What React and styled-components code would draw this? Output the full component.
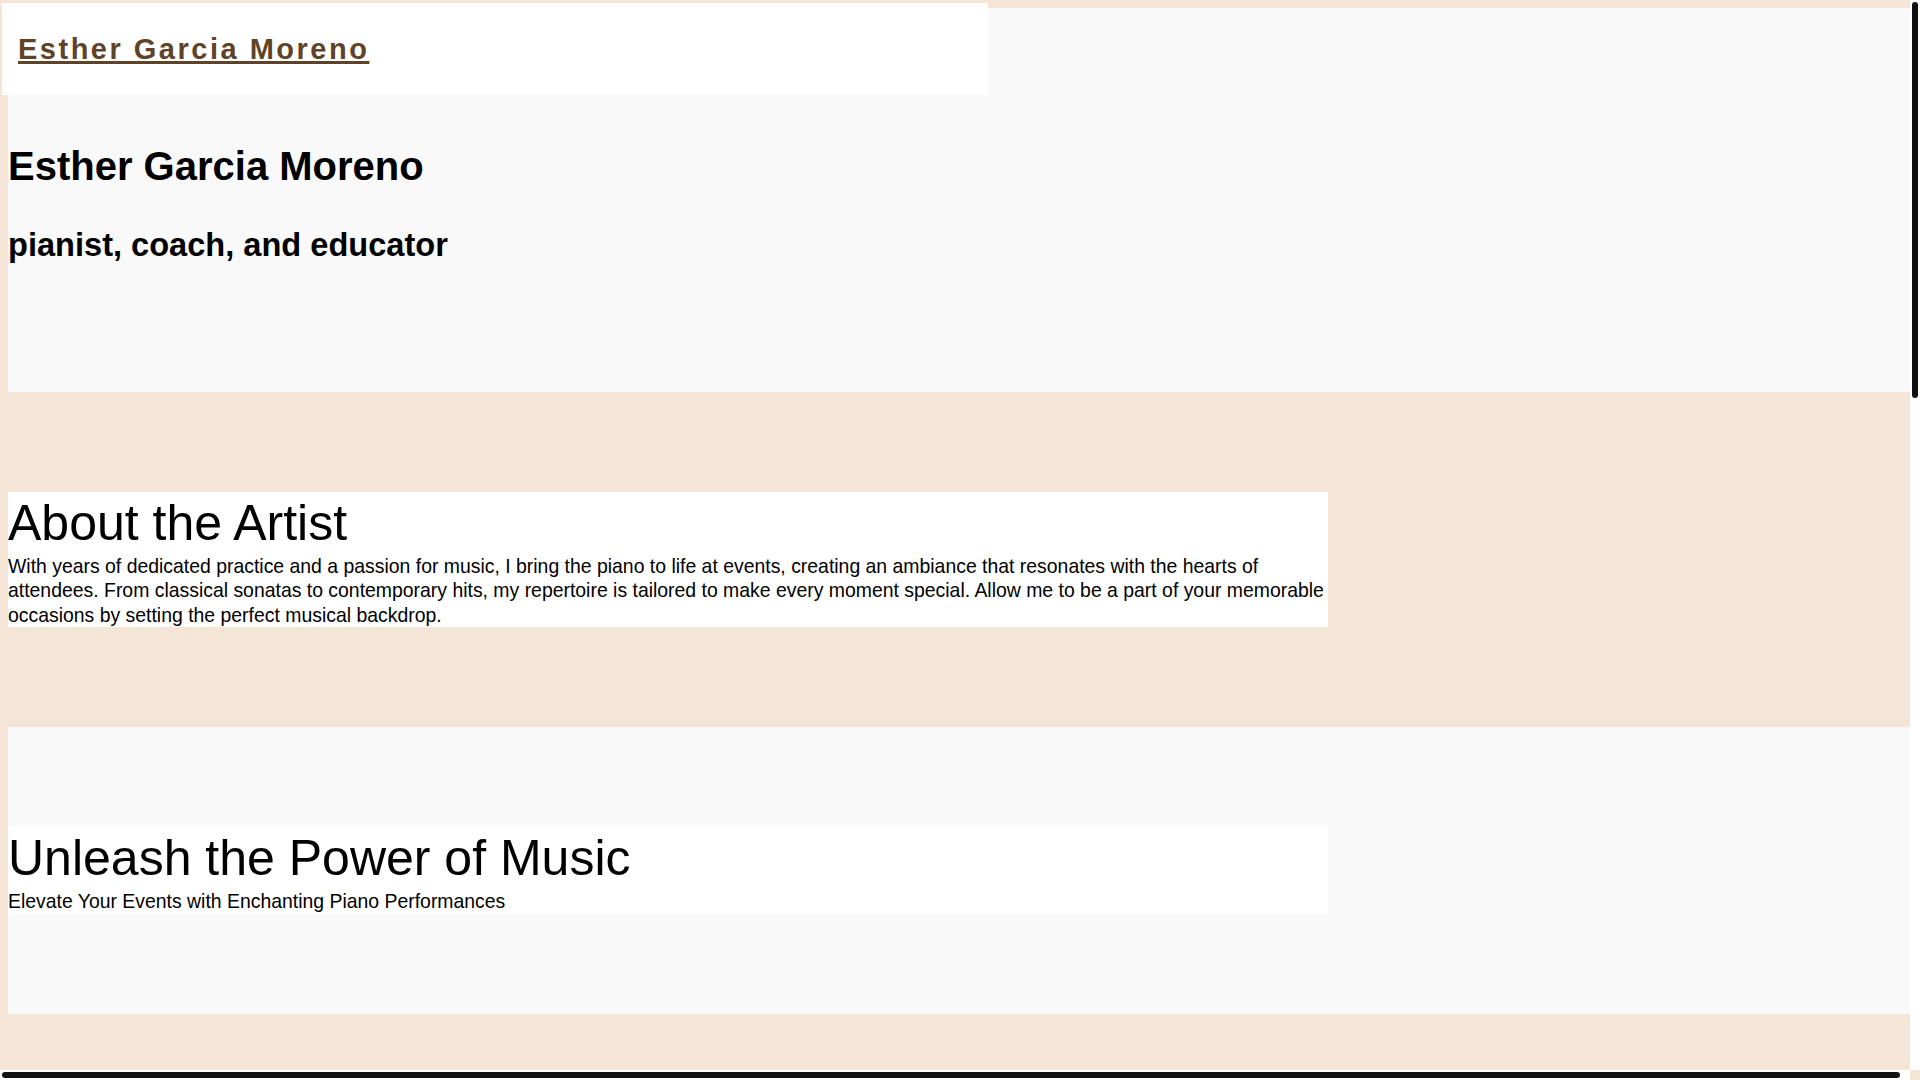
import React from "react"
import styled, {createGlobalStyle} from "styled-components"

const sections = [
	{
		id: "about",
		tone: "sand",
		title: "About the Artist",
		body: "With years of dedicated practice and a passion for music, I bring the piano to life at events, creating an ambiance that resonates with the hearts of attendees. From classical sonatas to contemporary hits, my repertoire is tailored to make every moment special. Allow me to be a part of your memorable occasions by setting the perfect musical backdrop.",
	},
	{
		id: "power",
		tone: "mist",
		title: "Unleash the Power of Music",
		lead: "Elevate Your Events with Enchanting Piano Performances",
	},
	{
		id: "services",
		tone: "sand",
		title: "Services",
		body: "Weddings, receptions, private recitals, corporate dinners and gala evenings. Every performance is planned with you, from the first consultation to the final chord, so the music fits the mood of the room. Coaching for singers and instrumentalists is offered in the studio or online, along with accompaniment for auditions, exams and competitions.",
	},
	{
		id: "lessons",
		tone: "mist",
		title: "Lessons for Every Level",
		body: "Piano lessons for children and adults, beginners and advanced students. Lessons cover technique, reading, theory and repertoire, and are shaped around the goals of each student, whether that is a first recital, a conservatory audition or simply the joy of playing at home.",
	},
	{
		id: "repertoire",
		tone: "sand",
		title: "Repertoire",
		body: "Bach, Mozart, Chopin, Debussy and Granados sit beside film scores, jazz standards and today's chart hits. Requests are always welcome: if there is a song that means something to you, I will arrange it for piano so that it can be part of your day. A full list of pieces is available on request, and new arrangements are added every season.",
	},
	{
		id: "testimonials",
		tone: "mist",
		title: "Kind Words",
		body: "\u201cEsther made our wedding day unforgettable. Guests are still talking about the music.\u201d \u201cA patient, inspiring teacher. My daughter looks forward to every lesson.\u201d \u201cThe perfect accompanist for our spring concert: sensitive, precise and always prepared.\u201d",
	},
	{
		id: "contact",
		tone: "sand",
		title: "Get in Touch",
		body: "To book a performance or a lesson, send a message with the date, the place and a few words about your event. I will reply within two working days, and together we can plan the music that suits your occasion, your guests and your venue.",
	},
]

const App = () => {
	return (
	<>
		<GlobalStyle />
		<Frame>
			<Viewport>
				<Hero>
					<HeroName>Esther Garcia Moreno</HeroName>
					<HeroRole>pianist, coach, and educator</HeroRole>
				</Hero>
				{
					sections.map((_s)=>(
						<Band key={_s.id} tone={_s.tone}>
							<Card>
								<CardTitle>{_s.title}</CardTitle>
								{_s.body && <CardText>{_s.body}</CardText>}
								{_s.lead && <CardLead>{_s.lead}</CardLead>}
							</Card>
						</Band>
					))
				}
				<Footer>
					<FooterText>&copy; 2024 Esther Garcia Moreno</FooterText>
				</Footer>
			</Viewport>
			<Rail><Thumb axis="y" /></Rail>
			<Rail><Thumb axis="x" /></Rail>
			<RailCorner />
		</Frame>
		<TopBar>
			<Brand href="#">Esther Garcia Moreno</Brand>
		</TopBar>
	</>
	)
}
export default App

const GlobalStyle = createGlobalStyle`
	html, body{
		margin: 0;
		height: 100%;
		overflow: hidden;
	}
	body{
		background: #f5e5d7;
		color: #000;
		font-family: "Liberation Sans", Arial, sans-serif;
	}
`

const Frame = styled.div`
	height: 100vh;
	display: grid;
	grid-template-columns: minmax(0, 1fr) 10px;
	grid-template-rows: minmax(0, 1fr) 10px;
`

const Viewport = styled.main`
	overflow: auto;
	scrollbar-width: none;
	box-sizing: border-box;
	padding: 8px 0 8px 8px;
	background: #f5e5d7;
`

const Rail = styled.div`
	box-sizing: border-box;
	padding: 2px;
	background: #fff;
`

const Thumb = styled.div`
	background: #111;
	border-radius: 3px;
	${({axis}) => axis === "y"
		? "width: 6px; height: 396px;"
		: "height: 6px; width: 1898px;"}
`

const RailCorner = styled.div`
	background: #f5e5d7;
`

const TopBar = styled.header`
	position: fixed;
	top: 3px;
	left: 2px;
	z-index: 10;
	width: 986px;
	height: 92px;
	box-sizing: border-box;
	padding: 0 16px;
	display: flex;
	align-items: center;
	background: #fff;
`

const Brand = styled.a`
	font-size: 29px;
	font-weight: 700;
	letter-spacing: 2.5px;
	color: #5f4329;
	text-decoration: underline;
	text-decoration-thickness: 3px;
`

const Hero = styled.section`
	width: calc(100% + 8px);
	box-sizing: border-box;
	padding: 134px 0 128px;
	display: flex;
	flex-direction: column;
	gap: 36px;
	background: #f9f9f9;
`

const HeroName = styled.h1`
	margin: 0;
	font-size: 40px;
	line-height: 48px;
	font-weight: 700;
`

const HeroRole = styled.h2`
	margin: 0;
	font-size: 32.6px;
	line-height: 38px;
	font-weight: 700;
`

const Band = styled.section`
	width: calc(100% + 8px);
	box-sizing: border-box;
	padding: 100px 0;
	background: ${({tone}) => tone === "mist" ? "#f9f9f9" : "#f5e5d7"};
`

const Card = styled.div`
	width: 1320px;
	background: #fff;
`

const CardTitle = styled.h2`
	margin: 0;
	font-size: 50px;
	line-height: 62px;
	font-weight: 400;
`

const CardText = styled.p`
	margin: 0;
	font-size: 19.42px;
	line-height: 24.4px;
`

const CardLead = styled.p`
	margin: 0;
	font-size: 19.42px;
	line-height: 25px;
`

const Footer = styled.footer`
	width: calc(100% + 8px);
	box-sizing: border-box;
	padding: 100px 0;
	background: #f9f9f9;
`

const FooterText = styled.p`
	margin: 0;
	font-size: 19.42px;
	line-height: 25px;
`
